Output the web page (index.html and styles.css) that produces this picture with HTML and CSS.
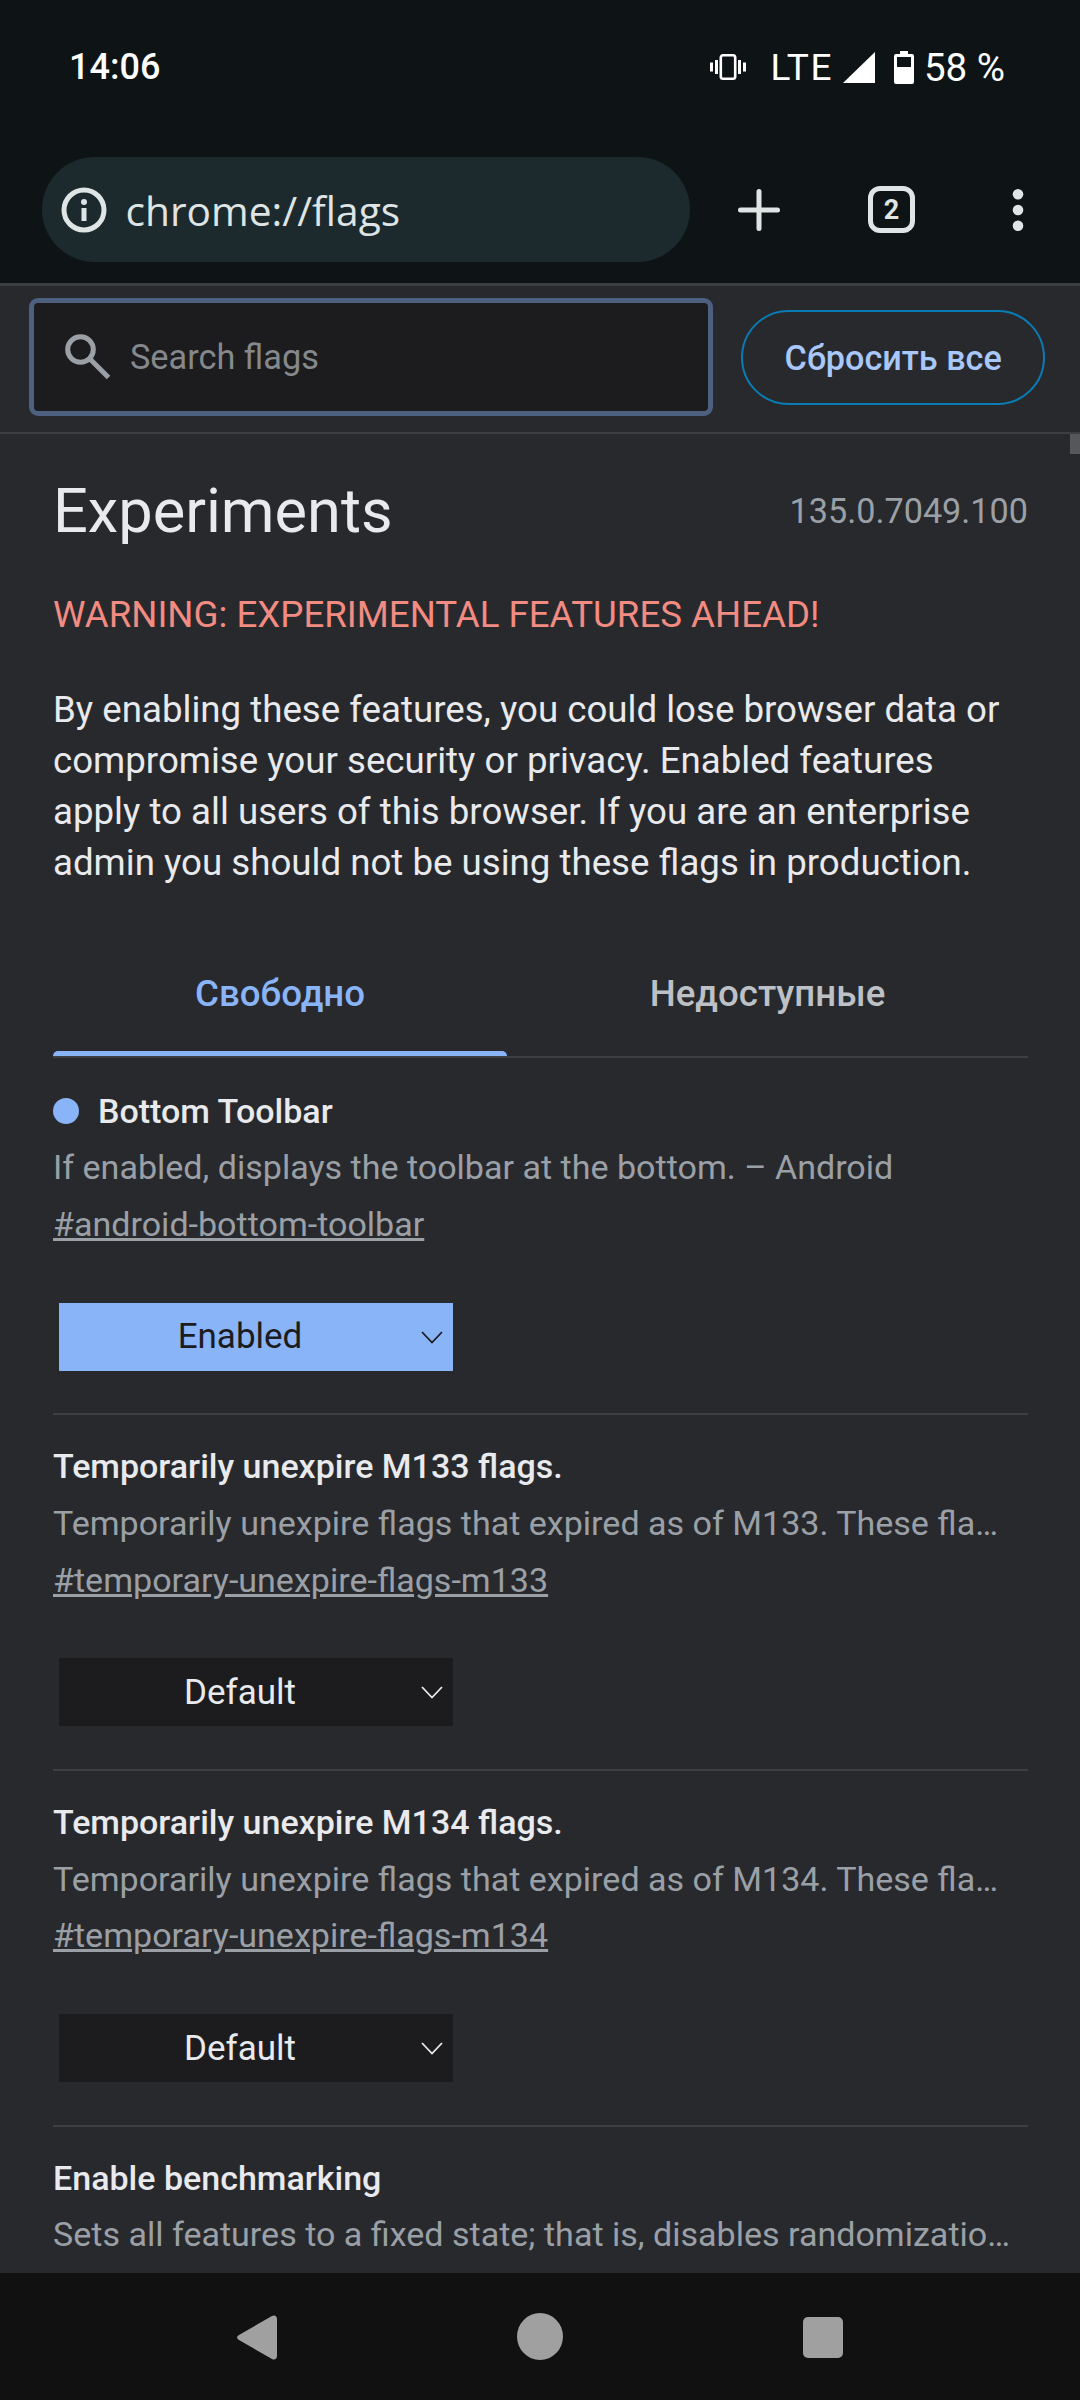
FILE: index.html
```html
<!DOCTYPE html>
<html lang="en">
<head>
<meta charset="utf-8">
<title>chrome://flags</title>
<link rel="stylesheet" href="styles.css">
</head>
<body>
<div class="phone">
  <header class="chrome">
    <div class="status">
      <span class="time">14:06</span>
      <div class="status-right">
        <svg class="ic-vib" width="36" height="26" viewBox="0 0 36 26"><rect x="10.800" y="1.300" width="14.400" height="23.400" rx="2.200" fill="none" stroke="#fff" stroke-width="2.600"/><path d="M6.500 6v14M1.500 8.500v9M29.500 6v14M34.500 8.500v9" stroke="#fff" stroke-width="3" fill="none"/></svg>
        <span class="lte">LTE</span>
        <svg class="ic-sig" width="32" height="31" viewBox="0 0 32 31"><path d="M32 0v31H0z" fill="#fff"/></svg>
        <svg class="ic-bat" width="20" height="33" viewBox="0 0 20 33"><path d="M6 0h8v3h4a2 2 0 0 1 2 2v26a2 2 0 0 1-2 2H2a2 2 0 0 1-2-2V5a2 2 0 0 1 2-2h4z" fill="#fff"/><rect x="3" y="6" width="14" height="10" fill="#0e1416"/></svg>
        <span class="pct">58 %</span>
      </div>
    </div>
    <div class="toolbar">
      <div class="omnibox">
        <svg class="ic-info" width="46" height="46" viewBox="0 0 46 46"><circle cx="23" cy="23" r="20" fill="none" stroke="#dfe4e4" stroke-width="5"/><circle cx="23" cy="15" r="3" fill="#dfe4e4"/><rect x="20.500" y="21" width="5" height="13" fill="#dfe4e4"/></svg>
        <span class="url">chrome://flags</span>
      </div>
      <svg class="ic-plus" width="42" height="42" viewBox="0 0 42 42"><path d="M21 2.500v37M2.500 21h37" stroke="#dfe4e4" stroke-width="5" stroke-linecap="round"/></svg>
      <div class="tabs-btn">2</div>
      <svg class="ic-dots" width="12" height="42" viewBox="0 0 12 42"><circle cx="6" cy="5.300" r="5.300" fill="#dfe4e4"/><circle cx="6" cy="21" r="5.300" fill="#dfe4e4"/><circle cx="6" cy="36.700" r="5.300" fill="#dfe4e4"/></svg>
    </div>
  </header>
  <div class="searchbar">
    <div class="search">
      <svg class="ic-search" width="46" height="46" viewBox="0 0 46 46"><circle cx="15.500" cy="15.500" r="12.800" fill="none" stroke="#9aa0a6" stroke-width="5"/><path d="M24.500 24.500L43.500 43.500" stroke="#9aa0a6" stroke-width="5"/></svg>
      <span class="placeholder">Search flags</span>
    </div>
    <div class="reset">Сбросить все</div>
  </div>
  <main class="content">
    <div class="scroll-thumb"></div>
    <div class="head">
      <h1 class="title">Experiments</h1>
      <span class="version">135.0.7049.100</span>
    </div>
    <p class="warning">WARNING: EXPERIMENTAL FEATURES AHEAD!</p>
    <p class="intro">By enabling these features, you could lose browser data or compromise your security or privacy. Enabled features apply to all users of this browser. If you are an enterprise admin you should not be using these flags in production.</p>
    <div class="tabs">
      <div class="tab active">Свободно</div>
      <div class="tab">Недоступные</div>
    </div>
    <section class="flag">
      <h2 class="flag-name"><span class="dot"></span>Bottom Toolbar</h2>
      <p class="flag-desc">If enabled, displays the toolbar at the bottom. – Android</p>
      <a class="flag-link">#android-bottom-toolbar</a>
      <div class="select on">Enabled<svg class="chev" width="22" height="13" viewBox="0 0 22 13"><path d="M1 1l10 10.500L21 1" fill="none" stroke="#1c1c1e" stroke-width="1.800"/></svg></div>
    </section>
    <section class="flag">
      <h2 class="flag-name">Temporarily unexpire M133 flags.</h2>
      <p class="flag-desc">Temporarily unexpire flags that expired as of M133. These fla…</p>
      <a class="flag-link">#temporary-unexpire-flags-m133</a>
      <div class="select">Default<svg class="chev" width="22" height="13" viewBox="0 0 22 13"><path d="M1 1l10 10.500L21 1" fill="none" stroke="#e8eaed" stroke-width="1.800"/></svg></div>
    </section>
    <section class="flag">
      <h2 class="flag-name">Temporarily unexpire M134 flags.</h2>
      <p class="flag-desc">Temporarily unexpire flags that expired as of M134. These fla…</p>
      <a class="flag-link">#temporary-unexpire-flags-m134</a>
      <div class="select">Default<svg class="chev" width="22" height="13" viewBox="0 0 22 13"><path d="M1 1l10 10.500L21 1" fill="none" stroke="#e8eaed" stroke-width="1.800"/></svg></div>
    </section>
    <section class="flag">
      <h2 class="flag-name">Enable benchmarking</h2>
      <p class="flag-desc">Sets all features to a fixed state; that is, disables randomizatio…</p>
    </section>
  </main>
  <nav class="nav">
    <svg width="40" height="45" viewBox="0 0 40 45"><path d="M35 1c2.500-1.500 5 0 5 3v37c0 3-2.500 4.500-5 3L2 25c-2.500-1.500-2.500-3.500 0-5z" fill="#a0a0a0"/></svg>
    <svg width="46" height="47" viewBox="0 0 46 47"><ellipse cx="23" cy="23.500" rx="23" ry="23.500" fill="#a0a0a0"/></svg>
    <svg width="40" height="41" viewBox="0 0 40 41"><rect width="40" height="41" rx="5" fill="#a0a0a0"/></svg>
  </nav>
</div>
</body>
</html>
```
FILE: styles.css
```css
* { box-sizing: border-box; }
html, body { margin: 0; padding: 0; }
body { width: 1080px; height: 2400px; overflow: hidden; background: #28292d; font-family: Roboto, "Noto Sans", sans-serif; }
.phone { width: 1080px; height: 2400px; display: flex; flex-direction: column; overflow: hidden; }

.chrome { height: 286px; background: #0e1416; border-bottom: 3px solid #3a3f41; flex: none; }
.status { height: 157px; padding: 0 75px 23px 69px; display: flex; align-items: center; justify-content: space-between; color: #fff; }
.time { font-size: 36px; font-weight: 500; }
.status-right { display: flex; align-items: center; }
.ic-vib { margin-right: 24px; }
.lte { font-size: 37px; letter-spacing: 1.500px; margin-right: 10px; }
.ic-sig { margin-right: 19px; }
.ic-bat { margin-right: 10px; }
.pct { font-size: 38.500px; }

.toolbar { height: 105px; padding-left: 42px; display: flex; align-items: center; }
.omnibox { width: 648px; height: 105px; border-radius: 53px; background: #1c2a2e; display: flex; align-items: center; padding-left: 18.500px; }
.ic-info { flex: none; }
.url { margin-left: 19px; font-size: 40.700px; color: #dfe4e4; font-family: "Open Sans", Roboto, sans-serif; }
.ic-plus { margin-left: 48px; }
.tabs-btn { margin-left: 88px; width: 47px; height: 47px; border: 5px solid #dfe4e4; border-radius: 12px; color: #dfe4e4; font-size: 27px; font-weight: 700; display: flex; align-items: center; justify-content: center; }
.ic-dots { margin-left: 97px; }

.searchbar { height: 148px; flex: none; border-bottom: 2px solid #3c3e42; background: #28292d; padding: 12px 35px 0 29px; display: flex; align-items: flex-start; }
.search { width: 685px; height: 118px; border: 5px solid #4d6080; border-radius: 9px; background: #1c1c1e; display: flex; align-items: center; padding-left: 31px; }
.placeholder { margin-left: 19px; font-size: 34.300px; color: #85888c; }
.reset { margin: 12px 0 0 28px; width: 304px; height: 95px; border: 2px solid #0a7cb5; border-radius: 48px; color: #a8c7fa; font-size: 34.200px; font-weight: 500; display: flex; align-items: center; justify-content: center; }

.content { flex: 1; min-height: 0; overflow: hidden; position: relative; padding: 0 52px 0 53px; }
.scroll-thumb { position: absolute; right: 0; top: 0; width: 10px; height: 20px; background: #55575b; }
.head { display: flex; justify-content: space-between; align-items: center; height: 84px; margin-top: 35px; }
.title { margin: 0; font-size: 61.300px; font-weight: 400; color: #e8eaed; }
.version { font-size: 34.200px; color: #9aa0a6; }
.warning { margin: 39.500px 0 0; font-size: 36.670px; line-height: 44px; color: #f28b82; }
.intro { margin: 47px 0 0; font-size: 36.670px; line-height: 51px; color: #e8eaed; }

.tabs { display: flex; margin: 59.500px 0 1.500px; height: 111px; border-bottom: 2px solid #3c4043; font-size: 36.670px; font-weight: 500; color: #bdc1c6; }
.tab { position: relative; display: flex; align-items: center; justify-content: center; padding-bottom: 17px; }
.tab:first-child { width: 454px; }
.tab:last-child { flex: 1; }
.tab.active { color: #8ab4f8; }
.tab.active::after { content: ""; position: absolute; left: 0; right: 0; bottom: 0; height: 5px; background: #8ab4f8; border-radius: 5px 5px 0 0; }

.flag { border-bottom: 2px solid #3c4043; padding: 23px 0 42.600px; }
.flag:last-child { border-bottom: 0; }
.flag-name { margin: 0; font-size: 34px; font-weight: 500; line-height: 56.700px; color: #e8eaed; display: flex; align-items: center; }
.dot { width: 26px; height: 26px; border-radius: 50%; background: #8ab4f8; margin-right: 19px; }
.flag-desc { margin: 0; font-size: 34.050px; line-height: 56.700px; color: #9aa0a6; white-space: nowrap; }
.flag-link { display: block; font-size: 34.050px; line-height: 56.700px; color: #9aa0a6; text-decoration: underline; }
.select { position: relative; margin: 50px 0 0 6px; width: 394px; height: 68px; background: #1c1c1e; color: #e8eaed; font-size: 35px; display: flex; align-items: center; justify-content: center; padding-right: 32px; }
.select.on { background: #8ab4f8; color: #1c1c1e; }
.chev { position: absolute; right: 10px; top: 28px; }

.nav { height: 127px; flex: none; background: #111; padding-top: 40px; display: flex; align-items: flex-start; }
.nav svg:nth-child(1) { margin: 2px 0 0 237px; }
.nav svg:nth-child(2) { margin: 0 0 0 240px; }
.nav svg:nth-child(3) { margin: 4px 0 0 240px; }
```
